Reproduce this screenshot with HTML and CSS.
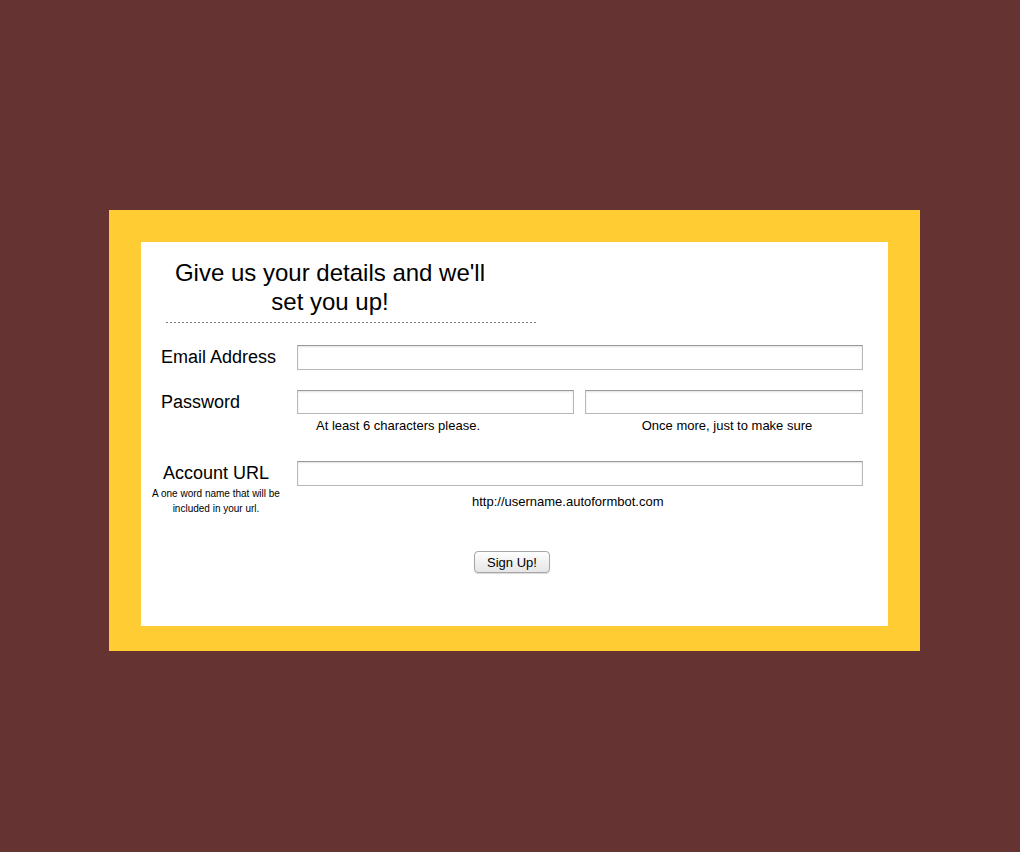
FILE: index.html
```html
<!DOCTYPE html>
<html>
<head>
<meta charset="utf-8">
<title>Sign up</title>
<link rel="stylesheet" href="styles.css">
</head>
<body>
<div class="frame">
  <div class="panel">
    <h1 class="title">Give us your details and we'll<br>set you up!</h1>
    <form class="form" onsubmit="return false">
      <div class="row row-email">
        <label class="label">Email Address</label>
        <div class="fields">
          <input class="field" type="text">
        </div>
      </div>
      <div class="row row-password">
        <label class="label">Password</label>
        <div class="fields pair">
          <div class="col col-first">
            <input class="field" type="password">
            <div class="hint hint-left">At least 6 characters please.</div>
          </div>
          <div class="col">
            <input class="field" type="password">
            <div class="hint hint-right">Once more, just to make sure</div>
          </div>
        </div>
      </div>
      <div class="row row-account">
        <div class="label-block">
          <label class="label label-center">Account URL</label>
          <div class="sublabel">A one word name that will be<br>included in your url.</div>
        </div>
        <div class="fields">
          <input class="field" type="text">
          <div class="hint hint-url">http://username.autoformbot.com</div>
        </div>
      </div>
      <div class="actions">
        <button class="btn" type="submit">Sign Up!</button>
      </div>
    </form>
  </div>
</div>
</body>
</html>
```
FILE: styles.css
```css
* { box-sizing: border-box; }
html, body {
  margin: 0;
  padding: 0;
}
body {
  background: #663333;
  font-family: "Liberation Sans", Arial, Helvetica, sans-serif;
  color: #000;
  height: 852px;
  overflow: hidden;
}
.frame {
  margin: 210px 0 0 109px;
  width: 811px;
  height: 441px;
  background: #ffcc33;
  padding: 32px 32px 25px 32px;
}
.panel {
  background: #fff;
  width: 747px;
  height: 384px;
  padding-top: 16px;
}
.title {
  margin: 0 0 0 25px;
  width: 370px;
  padding: 0 42px 7px 0;
  font-size: 24px;
  line-height: 29px;
  font-weight: normal;
  text-align: center;
  background-image: linear-gradient(to right, #7a7a7a 50%, transparent 50%);
  background-size: 4px 1px;
  background-repeat: repeat-x;
  background-position: 0 100%;
}
.form {
  padding: 22px 25px 0 20px;
}
.row {
  display: flex;
}
.label {
  display: block;
  width: 136px;
  flex: none;
  font-size: 18px;
}
.fields {
  flex: 1;
}
.row-email {
  align-items: center;
  height: 25px;
}
.row-email .label { line-height: 25px; }
.row-password {
  margin-top: 20px;
}
.row-password .label { line-height: 24px; }
.pair {
  display: flex;
  gap: 11px;
}
.col { flex: 1; }
.col-first { flex: 0 0 277px; }
.field {
  display: block;
  width: 100%;
  height: 25px;
  margin: 0;
  border: 1px solid #b8b8b8;
  border-top-color: #9a9a9a;
  box-shadow: inset 0 1px 2px rgba(0,0,0,0.12);
  background: #fff;
  font-family: inherit;
  font-size: 13px;
  padding: 2px 4px;
  outline: none;
}
.row-password .field { height: 24px; }
.hint {
  font-size: 13px;
  line-height: 15px;
  margin-top: 4px;
}
.hint-left { padding-left: 19px; }
.hint-right { text-align: center; padding-left: 6px; }
.row-account {
  margin-top: 28px;
}
.label-block {
  flex: none;
  margin-left: -20px;
  width: 156px;
  padding-right: 6px;
  text-align: center;
}
.label-center {
  width: auto;
  line-height: 22px;
  padding-top: 1px;
}
.sublabel {
  font-size: 10px;
  line-height: 15px;
  margin-top: 2px;
}
.hint-url {
  margin-top: 8px;
  padding-left: 175px;
}
.actions {
  margin-top: 35px;
  text-align: center;
}
.btn {
  width: 76px;
  height: 22px;
  padding: 0;
  font-family: inherit;
  font-size: 13px;
  color: #000;
  border: 1px solid #a6a6a6;
  border-radius: 4px;
  background: linear-gradient(#ffffff, #f1f1f1 50%, #e6e6e6);
  box-shadow: 0 1px 1px rgba(0,0,0,0.15);
}
```
